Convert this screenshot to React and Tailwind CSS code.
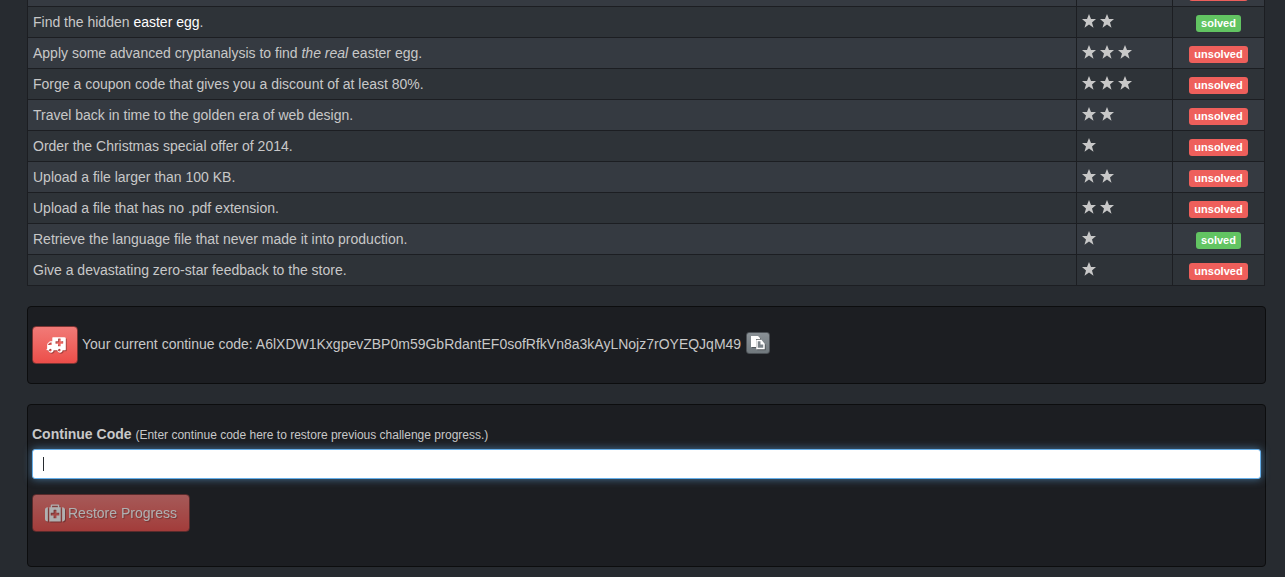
import React, { useState } from "react";

const CONTINUE_CODE = "A6lXDW1KxgpevZBP0m59GbRdantEF0sofRfkVn8a3kAyLNojz7rOYEQJqM49";

const challenges = [
  { text: "", stars: 1, solved: false },
  { text: <>Find the hidden <a href="#" className="text-white">easter egg</a>.</>, stars: 2, solved: true },
  { text: <>Apply some advanced cryptanalysis to find <em>the real</em> easter egg.</>, stars: 3, solved: false },
  { text: "Forge a coupon code that gives you a discount of at least 80%.", stars: 3, solved: false },
  { text: "Travel back in time to the golden era of web design.", stars: 2, solved: false },
  { text: "Order the Christmas special offer of 2014.", stars: 1, solved: false },
  { text: "Upload a file larger than 100 KB.", stars: 2, solved: false },
  { text: "Upload a file that has no .pdf extension.", stars: 2, solved: false },
  { text: "Retrieve the language file that never made it into production.", stars: 1, solved: true },
  { text: "Give a devastating zero-star feedback to the store.", stars: 1, solved: false },
];

function Star() {
  return (
    <svg viewBox="0 0 14 14" className="w-[14px] h-[14px] fill-[#c8c8c8]" aria-hidden="true">
      <path d="M7 0l2 5h5l-4 3.400 1.500 5.400L7 10.600l-4.500 3.200L4 8.400 0 5h5z" />
    </svg>
  );
}

function AmbulanceIcon() {
  return (
    <svg viewBox="0 0 2048 1792" className="w-[21px] h-[18px] fill-current drop-shadow-[1px_1px_0_rgba(0,0,0,0.3)]" aria-hidden="true">
      <path d="M640 1408q0-52-38-90t-90-38-90 38-38 90 38 90 90 38 90-38 38-90zm-384-512h384v-256h-158q-14 2-22 9l-195 195q-7 12-9 22v30zm1280 512q0-52-38-90t-90-38-90 38-38 90 38 90 90 38 90-38 38-90zm256-672v-192q0-14-9-23t-23-9h-224v-224q0-14-9-23t-23-9h-192q-14 0-23 9t-9 23v224h-224q-14 0-23 9t-9 23v192q0 14 9 23t23 9h224v224q0 14 9 23t23 9h192q14 0 23-9t9-23v-224h224q14 0 23-9t9-23zm256-608v1216q0 26-19 45t-45 19h-256q0 106-75 181t-181 75-181-75-75-181h-384q0 106-75 181t-181 75-181-75-75-181h-128q-26 0-45-19t-19-45 19-45 45-19v-416q0-26 13-58t32-51l198-198q19-19 51-32t58-13h160v-320q0-26 19-45t45-19h1152q26 0 45 19t19 45z" />
    </svg>
  );
}

function MedkitIcon() {
  return (
    <svg viewBox="0 0 1792 1792" className="w-5 h-5 fill-current drop-shadow-[1px_1px_0_rgba(0,0,0,0.3)]" aria-hidden="true">
      <path d="M1280 1088v-192q0-14-9-23t-23-9h-224v-224q0-14-9-23t-23-9h-192q-14 0-23 9t-9 23v224h-224q-14 0-23 9t-9 23v192q0 14 9 23t23 9h224v224q0 14 9 23t23 9h192q14 0 23-9t9-23v-224h224q14 0 23-9t9-23zm-640-704h512v-128h-512v128zm-384 0v1280h-32q-92 0-158-66t-66-158v-832q0-92 66-158t158-66h32zm1152 0v1280h-1024v-1280h128v-160q0-40 28-68t68-28h576q40 0 68 28t28 68v160h128zm384 224v832q0 92-66 158t-158 66h-32v-1280h32q92 0 158 66t66 158z" />
    </svg>
  );
}

function CopyIcon() {
  return (
    <svg viewBox="0 0 14 14" className="w-[14px] h-[14px] drop-shadow-[1px_1px_0_rgba(0,0,0,0.3)]" aria-hidden="true">
      <path d="M0 0h7l2 2v1H5v8H0z" fill="#fff" />
      <path d="M6 4.500h4l3 3.500v4.500H6z" fill="#7a8288" stroke="#fff" strokeWidth="1.500" />
      <path d="M9.500 4.500V8.500H13z" fill="#fff" />
    </svg>
  );
}

function Status({ solved }) {
  return (
    <span className={`inline-block rounded-[3px] px-[5px] text-[11px] leading-[17px] font-bold text-white ${solved ? "bg-[#62c462]" : "bg-[#ee5f5b]"}`}>
      {solved ? "solved" : "unsolved"}
    </span>
  );
}

export default function App() {
  const [code, setCode] = useState("");

  return (
    <main className="min-h-screen overflow-hidden bg-[#272b30] pl-[27px] pr-[19px] pb-[10px] font-['Liberation_Sans',Arial,sans-serif] text-sm text-[#c8c8c8]">
      <div className="-mt-[25px] pr-px">
        <table className="w-full table-fixed border-collapse">
          <colgroup>
            <col />
            <col className="w-24" />
            <col className="w-[92px]" />
          </colgroup>
          <tbody>
            {challenges.map((c, i) => (
              <tr key={i} className="h-[31px] odd:bg-[#353a41] even:bg-[#2e3338]">
                <td className="border border-[#1c1e22] px-[5px] leading-5">{c.text}</td>
                <td className="border border-[#1c1e22] px-[5px]">
                  <div className="flex gap-1 pb-[3px]">
                    {Array.from({ length: c.stars }, (_, s) => <Star key={s} />)}
                  </div>
                </td>
                <td className="border border-[#1c1e22] pt-[2px] text-center leading-none">
                  <Status solved={c.solved} />
                </td>
              </tr>
            ))}
          </tbody>
        </table>
      </div>

      <section className="mt-5 flex items-center rounded border border-[#0c0d0e] bg-[#1c1e22] px-1 py-[19px]">
        <button
          type="button"
          aria-label="Back up progress"
          className="mr-1 flex h-[38px] w-[46px] items-center justify-center rounded border border-[#7c3433] bg-linear-to-b from-[#f17a77] to-[#ec4d49] text-white"
        >
          <AmbulanceIcon />
        </button>
        <span className="pb-[2px]">Your current continue code: {CONTINUE_CODE}</span>
        <button
          type="button"
          aria-label="Copy to clipboard"
          className="ml-[5px] mb-1 flex h-[22px] w-6 items-center justify-center rounded-[3px] border border-[#4c5156] bg-linear-to-b from-[#8a9196] to-[#70787d]"
        >
          <CopyIcon />
        </button>
      </section>

      <section className="mt-5 rounded border border-[#0c0d0e] bg-[#1c1e22] px-1 pt-[19px] pb-[34px]">
        <label htmlFor="continueCode" className="mb-[5px] block leading-5">
          <strong>Continue Code</strong>{" "}
          <small className="text-xs">(Enter continue code here to restore previous challenge progress.)</small>
        </label>
        <div className="relative">
          <input
            id="continueCode"
            type="text"
            autoFocus
            value={code}
            onChange={(e) => setCode(e.target.value)}
            className={`block h-[30px] w-full rounded-[3px] border border-[#66afe9] bg-white px-[10px] text-[#272b30] shadow-[0_0_8px_rgba(102,175,233,0.6)] outline-none ${code ? "" : "caret-transparent"}`}
          />
          {!code && <span className="pointer-events-none absolute top-2 left-[11px] h-[14px] w-px bg-[#272b30]" />}
        </div>
        <button
          type="button"
          disabled={!code}
          className="mt-[15px] flex h-[38px] items-center gap-[3px] rounded border border-[#7c3433] bg-linear-to-b from-[#f17a77] to-[#ec4d49] px-3 text-white [text-shadow:1px_1px_1px_rgba(0,0,0,0.3)] disabled:opacity-65"
        >
          <MedkitIcon />
          Restore Progress
        </button>
      </section>
    </main>
  );
}
